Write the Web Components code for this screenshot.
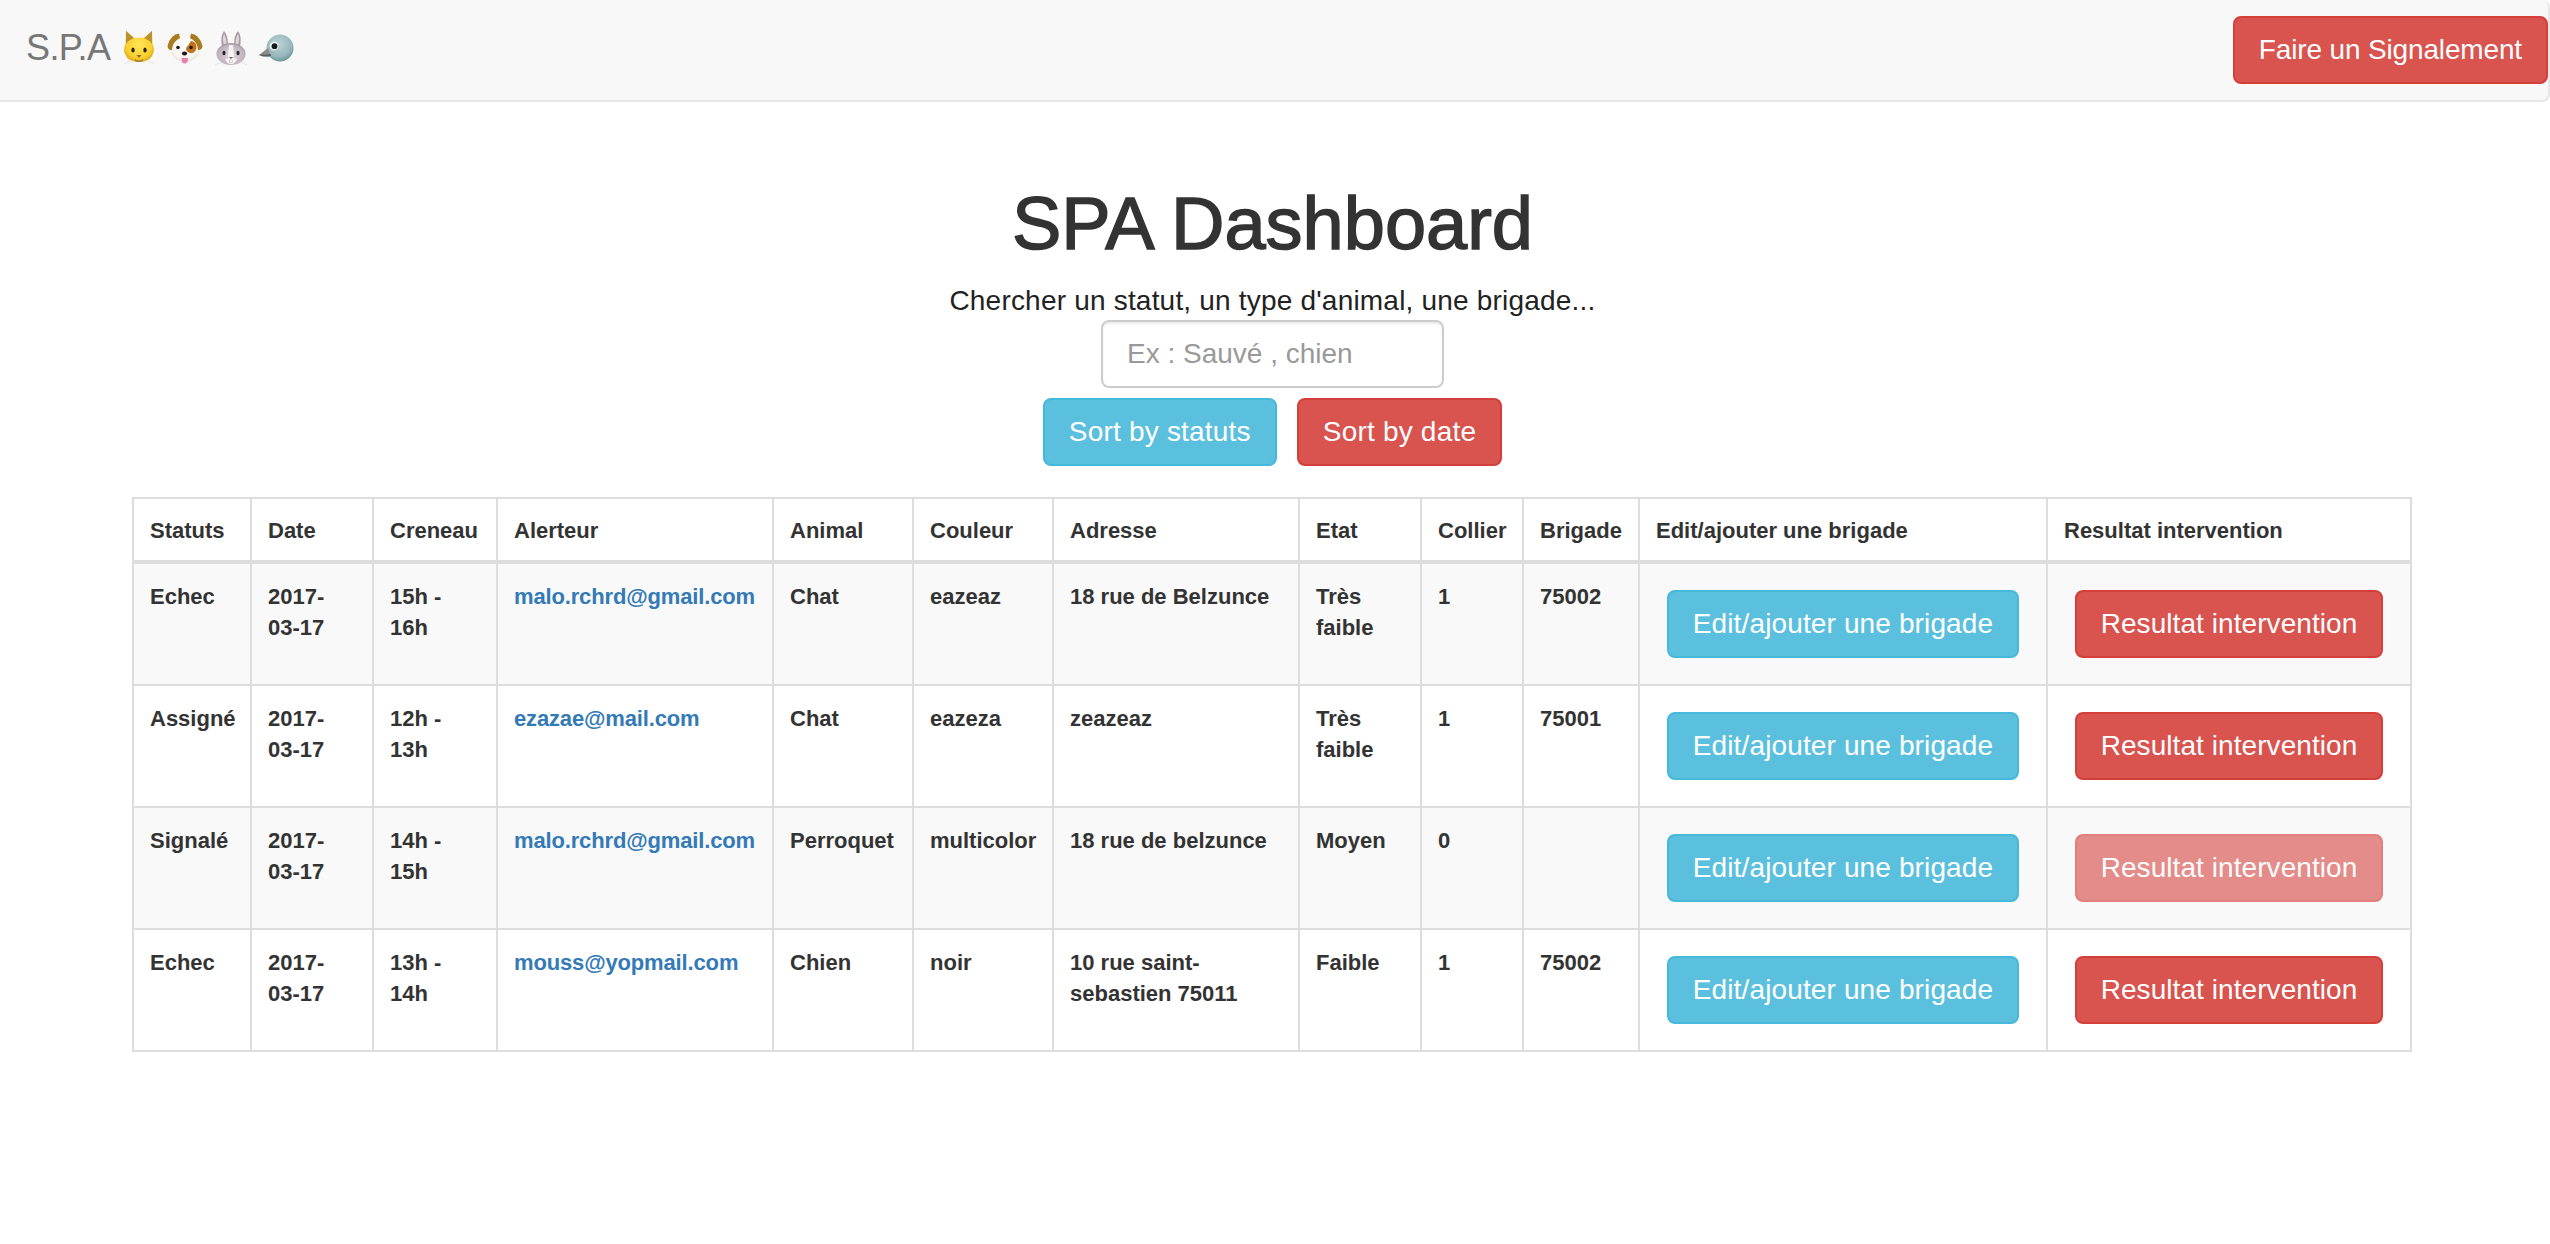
<!DOCTYPE html>
<html lang="fr">
<head>
<meta charset="utf-8">
<title>SPA Dashboard</title>
<style>
  html, body { margin: 0; padding: 0; background: #fff; }
  body { font-family: "Liberation Sans", Arial, sans-serif; font-size: 28px; line-height: 1.42857; color: #333; }
</style>
</head>
<body>
<spa-navbar>
  <spa-button slot="action" kind="danger" style="letter-spacing:-.15px">Faire un Signalement</spa-button>
</spa-navbar>
<spa-search></spa-search>
<spa-table></spa-table>

<script>
class SpaButton extends HTMLElement {
    constructor() {
        super();
        this.attachShadow({ mode: 'open' });
        this.shadowRoot.innerHTML = `
            <style>
                :host {
                    display: inline-block;
                    box-sizing: border-box;
                    height: 68px;
                    padding: 12px 24px;
                    border: 2px solid #46b8da;
                    border-radius: 8px;
                    background: #5bc0de;
                    color: #fff;
                    font-size: 28px;
                    line-height: 40px;
                    text-align: center;
                    white-space: nowrap;
                    cursor: pointer;
                }

                :host([kind="danger"]) {
                    background: #d9534f;
                    border-color: #d43f3a;
                }

                :host([disabled]) {
                    opacity: .65;
                    cursor: not-allowed;
                }
            </style>
            <slot></slot>
        `;
    }
}

// no emoji font in the sandbox, so the four animals are drawn by hand
const ANIMALS = `
    <svg width="32" height="34" viewBox="0 0 32 34" role="img" aria-label="chat">
        <defs><radialGradient id="cat" cx=".5" cy=".45" r=".6"><stop offset="0" stop-color="#ffe659"/><stop offset=".7" stop-color="#fbcf2c"/><stop offset="1" stop-color="#d9a516"/></radialGradient></defs>
        <path d="M3 0 L11 7 Q16 6 21 7 L29 0 L29.5 13 Q32 18 30 23 Q27 31 16 31 Q5 31 2 23 Q0 18 2.5 13Z" fill="url(#cat)"/>
        <path d="M3 0 L11 7 Q6 9 3 13Z M29 0 L21 7 Q26 9 29 13Z" fill="#b9932c"/>
        <ellipse cx="10" cy="19" rx="1.7" ry="2.5" fill="#2b2210"/><ellipse cx="22" cy="19" rx="1.7" ry="2.5" fill="#2b2210"/>
        <path d="M13.5 24 H18.5 L16 27Z" fill="#8d6a3c"/>
        <path d="M12 28 Q16 31 20 28 L20 30 Q16 32 12 30Z" fill="#9a7a3a"/>
        <path d="M1 33 L7 30 M31 33 L25 30" stroke="#e3e3e3" stroke-width="1"/>
    </svg>
    <svg width="36" height="33" viewBox="0 0 36 33" role="img" aria-label="chien">
        <defs><radialGradient id="dog" cx=".5" cy=".45" r=".6"><stop offset="0" stop-color="#fff"/><stop offset=".8" stop-color="#f6f3ee"/><stop offset="1" stop-color="#cfc8ba"/></radialGradient></defs>
        <ellipse cx="18" cy="15.5" rx="15" ry="14" fill="url(#dog)"/>
        <path d="M12 1.5 Q3 3 0.5 14 Q1 18.5 5 18 Q5 10 13 6Z" fill="#a97a1e"/>
        <path d="M24 1.5 Q33 3 35.5 14 Q35 18.5 31 18 Q31 10 23 6Z" fill="#a97a1e"/>
        <path d="M24 9 Q30 10 29.5 16 Q28 22 23 21 Q19 20 19 16 Q21 14 24 9Z" fill="#c0701a"/>
        <circle cx="11" cy="15.5" r="1.8" fill="#1d1a16"/><circle cx="24" cy="15.5" r="1.8" fill="#1d1a16"/>
        <ellipse cx="17.5" cy="21.5" rx="2.6" ry="1.9" fill="#1d1a16"/>
        <path d="M14.5 26 H21 L20.5 30 Q17.5 33 15 30Z" fill="#ec7fa8"/>
    </svg>
    <svg width="32" height="36" viewBox="0 0 32 36" role="img" aria-label="lapin">
        <defs><radialGradient id="bun" cx=".5" cy=".55" r=".6"><stop offset="0" stop-color="#e1dae0"/><stop offset=".75" stop-color="#bfb3bd"/><stop offset="1" stop-color="#8f8590"/></radialGradient></defs>
        <path d="M9 1 Q5 6 7 17 L13 15 Q13 5 9 1Z" fill="#a89ca6"/><path d="M23 1 Q27 6 25 17 L19 15 Q19 5 23 1Z" fill="#a89ca6"/>
        <path d="M9 4 Q7 9 9 15 L11.5 15 Q11.5 8 9 4Z" fill="#e3d5da"/><path d="M23 4 Q25 9 23 15 L20.5 15 Q20.5 8 23 4Z" fill="#e3d5da"/>
        <ellipse cx="16" cy="24" rx="14.5" ry="11" fill="url(#bun)"/>
        <path d="M14 15 H18 L19 27 Q16 29 13 27Z M10 29 Q16 26 22 29 Q20 34 16 34 Q12 34 10 29Z" fill="#f6f2f4"/>
        <ellipse cx="9" cy="23" rx="1.6" ry="2.2" fill="#2b252b"/><ellipse cx="23" cy="23" rx="1.6" ry="2.2" fill="#2b252b"/>
        <path d="M14 27 H18 L16 29Z" fill="#6b5f66"/>
        <rect x="14.5" y="30" width="3" height="2.6" fill="#fff" stroke="#a99" stroke-width=".4"/>
        <path d="M0 35 L6 32 M32 35 L26 32" stroke="#e3e3e3" stroke-width="1"/>
    </svg>
    <svg width="35" height="28" viewBox="0 0 35 28" role="img" aria-label="oiseau">
        <defs><radialGradient id="bird" cx=".45" cy=".35" r=".75"><stop offset="0" stop-color="#bcd2d6"/><stop offset=".65" stop-color="#95b6bb"/><stop offset="1" stop-color="#4f7f80"/></radialGradient></defs>
        <circle cx="21" cy="14" r="13.5" fill="url(#bird)"/>
        <path d="M9 14 L0 21 Q5 23.5 12 22 Q10 18 9 14Z" fill="#8a8a8a"/>
        <path d="M2 20.5 Q7 21 11.5 20 L12 22 Q5 23.5 0 21Z" fill="#5b5e60"/>
        <circle cx="15" cy="12" r="4.4" fill="#eef3f3"/><circle cx="15.5" cy="12.2" r="2.9" fill="#14191b"/>
    </svg>
`;

class SpaNavbar extends HTMLElement {
    constructor() {
        super();
        this.attachShadow({ mode: 'open' });
        this.shadowRoot.innerHTML = `
            <style>
                :host {
                    display: flex;
                    align-items: flex-start;
                    justify-content: space-between;
                    box-sizing: border-box;
                    height: 102px;
                    background: #f8f8f8;
                    border: 2px solid #e7e7e7;
                    border-top: 0;
                    border-left: 0;
                    border-radius: 0 8px 8px 0;
                    padding: 16px 0 0 26px;
                }

                .brand {
                    display: flex;
                    align-items: center;
                    height: 64px;
                    color: #777;
                    font-size: 36px;
                    line-height: 40px;
                    white-space: nowrap;
                    letter-spacing: -.6px;
                }

                .pets {
                    display: flex;
                    align-items: center;
                    gap: 12px;
                    margin-left: 13px;
                }
            </style>
            <div class="brand">S.P.A<span class="pets">${ANIMALS}</span></div>
            <slot name="action"></slot>
        `;
    }
}

class SpaSearch extends HTMLElement {
    constructor() {
        super();
        this.attachShadow({ mode: 'open' });
        this.shadowRoot.innerHTML = `
            <style>
                :host {
                    display: flex;
                    flex-direction: column;
                    align-items: center;
                    padding: 82px 5px 0 0;
                }

                h1 {
                    margin: 0 0 18px;
                    font-size: 74px;
                    font-weight: 500;
                    line-height: 79px;
                    color: #333;
                    -webkit-text-stroke: 1.5px #333;
                }

                label {
                    color: #222;
                    font-size: 28px;
                    line-height: 39px;
                    letter-spacing: .2px;
                }

                input {
                    display: block;
                    box-sizing: border-box;
                    width: 343px;
                    height: 68px;
                    padding: 12px 24px;
                    border: 2px solid #ccc;
                    border-radius: 8px;
                    background: #fff;
                    color: #555;
                    font: inherit;
                    box-shadow: inset 0 2px 2px rgba(0, 0, 0, .075);
                    outline: none;
                }

                input::placeholder {
                    color: #999;
                    opacity: 1;
                }

                .actions {
                    display: flex;
                    gap: 20px;
                    margin-top: 10px;
                }
            </style>
            <h1>SPA Dashboard</h1>
            <label for="filter">Chercher un statut, un type d'animal, une brigade...</label>
            <input id="filter" type="text" placeholder="Ex : Sauvé , chien">
            <div class="actions">
                <spa-button style="letter-spacing:.2px">Sort by statuts</spa-button>
                <spa-button kind="danger" style="letter-spacing:.2px">Sort by date</spa-button>
            </div>
        `;
    }
}

const SIGNALEMENTS = [
    { statut: 'Echec', date: '2017-03-17', creneau: '15h - 16h', mail: 'malo.rchrd@gmail.com', animal: 'Chat', couleur: 'eazeaz', adresse: '18 rue de Belzunce', etat: 'Très faible', collier: '1', brigade: '75002' },
    { statut: 'Assigné', date: '2017-03-17', creneau: '12h - 13h', mail: 'ezazae@mail.com', animal: 'Chat', couleur: 'eazeza', adresse: 'zeazeaz', etat: 'Très faible', collier: '1', brigade: '75001' },
    { statut: 'Signalé', date: '2017-03-17', creneau: '14h - 15h', mail: 'malo.rchrd@gmail.com', animal: 'Perroquet', couleur: 'multicolor', adresse: '18 rue de belzunce', etat: 'Moyen', collier: '0', brigade: '', locked: true },
    { statut: 'Echec', date: '2017-03-17', creneau: '13h - 14h', mail: 'mouss@yopmail.com', animal: 'Chien', couleur: 'noir', adresse: '10 rue saint-sebastien 75011', etat: 'Faible', collier: '1', brigade: '75002' }
];

const COLONNES = [
    ['Statuts', 118], ['Date', 122], ['Creneau', 124], ['Alerteur', 276], ['Animal', 140], ['Couleur', 140],
    ['Adresse', 246], ['Etat', 122], ['Collier', 102], ['Brigade', 116], ['Edit/ajouter une brigade', 408], ['Resultat intervention', 364]
];

class SpaTable extends HTMLElement {
    constructor() {
        super();
        this.attachShadow({ mode: 'open' });
    }

    connectedCallback() {
        const lignes = SIGNALEMENTS.map(s => `
            <tr>
                <td>${s.statut}</td>
                <td>${s.date}</td>
                <td>${s.creneau}</td>
                <td><a href="#">${s.mail}</a></td>
                <td>${s.animal}</td>
                <td>${s.couleur}</td>
                <td>${s.adresse}</td>
                <td>${s.etat}</td>
                <td>${s.collier}</td>
                <td>${s.brigade}</td>
                <td class="btn"><spa-button style="letter-spacing:.13px">Edit/ajouter une brigade</spa-button></td>
                <td class="btn"><spa-button kind="danger" style="letter-spacing:.07px" ${s.locked ? 'disabled' : ''}>Resultat intervention</spa-button></td>
            </tr>
        `).join('');

        this.shadowRoot.innerHTML = `
            <style>
                :host {
                    display: block;
                    margin: 31px 140px 0 132px;
                }

                table {
                    width: 2278px;
                    table-layout: fixed;
                    border-collapse: collapse;
                    border: 2px solid #ddd;
                    font-size: 22px;
                    line-height: 31.4px;
                    font-weight: bold;
                    color: #333;
                }

                th, td {
                    padding: 17px 16px 16px;
                    border: 2px solid #ddd;
                    text-align: left;
                    vertical-align: top;
                }

                thead th {
                    padding: 16px 16px 13.6px;
                    border-bottom-width: 4px;
                    vertical-align: bottom;
                }

                tbody tr:nth-child(odd) {
                    background: #f9f9f9;
                }

                tbody tr {
                    height: 122px;
                }

                a {
                    color: #337ab7;
                    text-decoration: none;
                    letter-spacing: -.15px;
                }

                td.btn {
                    padding: 16px;
                    text-align: center;
                    white-space: nowrap;
                }

                spa-button {
                    margin: 10px 0;
                    font-weight: normal;
                }
            </style>
            <table>
                <colgroup>${COLONNES.map(c => `<col style="width:${c[1]}px">`).join('')}</colgroup>
                <thead><tr>${COLONNES.map(c => `<th>${c[0]}</th>`).join('')}</tr></thead>
                <tbody>${lignes}</tbody>
            </table>
        `;
    }
}

customElements.define('spa-button', SpaButton);
customElements.define('spa-navbar', SpaNavbar);
customElements.define('spa-search', SpaSearch);
customElements.define('spa-table', SpaTable);
</script>
</body>
</html>
